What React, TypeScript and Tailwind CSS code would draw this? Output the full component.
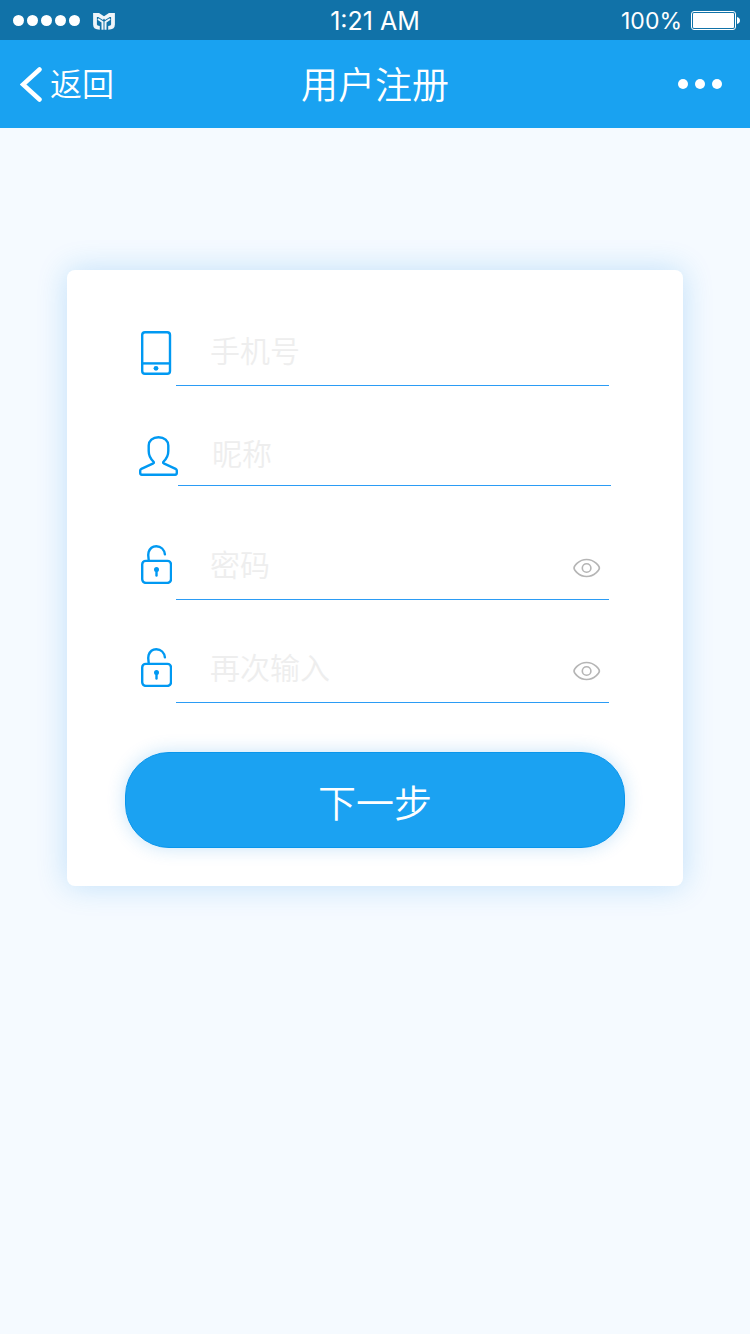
import { useState } from 'react';
import type { ReactNode } from 'react';

type Field = {
  id: string;
  label: string;
  type: 'tel' | 'text' | 'password';
  icon: ReactNode;
  rowClass: string;
  iconClass: string;
};

function PhoneIcon() {
  return (
    <svg width="32" height="46" viewBox="0 0 32 46" fill="none" stroke="#0099f2" strokeWidth="2.4">
      <rect x="2.2" y="2.2" width="27.8" height="41.6" rx="2.8" />
      <path d="M2.2 33.4h27.8" />
      <circle cx="16" cy="38.3" r="2.4" fill="#0099f2" stroke="none" />
    </svg>
  );
}

function UserIcon() {
  return (
    <svg width="39" height="41" viewBox="0 0 39 41" fill="none" stroke="#0099f2" strokeWidth="2.4" strokeLinejoin="round">
      <path d="M19.5 2.2C13.5 2.2 9.7 6 9.7 10.5v5.5c0 5 2 8 4.8 10.6.6.5.5 1.300-.2 1.700L2.400 33.900c-.8.400-1.200.9-1.200 1.700v2.500c0 1 .6 1.600 1.600 1.600h33.400c1 0 1.600-.6 1.600-1.600v-2.500c0-.8-.4-1.300-1.200-1.700l-11.900-5.600c-.7-.4-.8-1.200-.2-1.700 2.800-2.600 4.800-5.600 4.800-10.600v-5.500c0-4.500-3.800-8.300-9.800-8.300z" />
    </svg>
  );
}

function UnlockIcon() {
  return (
    <svg width="32" height="40" viewBox="0 0 32 40" fill="none" stroke="#0099f2" strokeWidth="2.4" strokeLinecap="round">
      <path d="M8.800 16.400C8.400 14 7.700 11 8.600 8.200 9.700 4.600 12.700 2.200 16.300 2.200c4.700 0 8 3.400 8.600 8.200" />
      <rect x="2.2" y="16.9" width="28.8" height="22" rx="3.6" />
      <circle cx="16.5" cy="25.5" r="2.5" fill="#0099f2" stroke="none" />
      <path d="M16.5 26v5.5" />
    </svg>
  );
}

function EyeIcon() {
  return (
    <svg width="28" height="20" viewBox="0 0 28 20" fill="none" stroke="#b5b5b5" strokeWidth="1.6" strokeLinejoin="round">
      <path d="M1 10c0-1.600 4.500-8.500 12.600-8.500S26.400 8.400 26.400 10s-4.700 8.500-12.800 8.500S1 11.600 1 10z" />
      <circle cx="13.6" cy="10" r="4.3" />
    </svg>
  );
}

const fields: Field[] = [
  { id: 'phone', label: '手机号', type: 'tel', icon: <PhoneIcon />, rowClass: 'h-[70px] pr-0.5', iconClass: 'w-[37px] pl-px pb-2.5' },
  { id: 'nickname', label: '昵称', type: 'text', icon: <UserIcon />, rowClass: 'mt-9 h-16', iconClass: 'w-[39px] pb-2.5' },
  { id: 'password', label: '密码', type: 'password', icon: <UnlockIcon />, rowClass: 'mt-11 h-[70px] pr-0.5', iconClass: 'w-[37px] pl-px pb-4' },
  { id: 'confirm', label: '再次输入', type: 'password', icon: <UnlockIcon />, rowClass: 'mt-[33px] h-[70px] pr-0.5', iconClass: 'w-[37px] pl-px pb-4' },
];

function FieldRow({ field }: { field: Field }) {
  const [visible, setVisible] = useState(false);
  const isPassword = field.type === 'password';

  return (
    <div className={`flex ${field.rowClass}`}>
      <label htmlFor={field.id} className={`flex shrink-0 items-end ${field.iconClass}`}>
        {field.icon}
      </label>
      <div className="flex min-w-0 flex-1 items-center border-b border-[#2b9cf5]">
        <input
          id={field.id}
          type={isPassword && visible ? 'text' : field.type}
          aria-label={field.label}
          placeholder={field.label}
          className="h-full min-w-0 flex-1 bg-transparent pb-1 pl-[34px] text-[30px] text-gray-700 outline-none placeholder:text-[#eeeeee]"
        />
        {isPassword && (
          <button
            type="button"
            aria-label="显示密码"
            onClick={() => setVisible(!visible)}
            className="mr-2 shrink-0 cursor-pointer pt-1.5"
          >
            <EyeIcon />
          </button>
        )}
      </div>
    </div>
  );
}

function StatusBar() {
  return (
    <div className="grid h-10 grid-cols-3 items-center bg-[#1172a8] px-2.5 font-['Inter',sans-serif] font-normal text-white">
      <div className="flex items-center pl-[3px]">
        <div className="flex gap-[3px]">
          {[0, 1, 2, 3, 4].map((i) => (
            <span key={i} className="size-[11px] rounded-full bg-white" />
          ))}
        </div>
        <svg className="ml-3" width="24" height="20" viewBox="0 0 24 20" fill="none" stroke="#f0f5f9">
          {/* outer wings */}
          <path d="M12 8.500L6.500 5H3v9.500c0 2.500 1.500 3.300 4.800 3.300M12 8.500L17.500 5H21v9.500c0 2.500-1.500 3.300-4.800 3.300" strokeWidth="3.8" />
          {/* centre stems */}
          <path d="M6 9l4.500 3v7.700M18 9l-4.500 3v7.700" strokeWidth="2" />
        </svg>
      </div>
      <div className="pt-0.5 text-center text-[25px] leading-8">1:21 AM</div>
      <div className="flex items-center justify-end">
        <span className="pt-px text-[23px] leading-8">100%</span>
        <svg className="ml-2" width="50" height="20" viewBox="0 0 50 20">
          <rect x="1.5" y="1.5" width="44" height="18" rx="2.5" fill="none" stroke="#fff" />
          <rect x="3" y="3" width="41" height="15" rx="1" fill="#fff" />
          <path d="M47 7c1.800.6 3 1.800 3 3.500s-1.200 2.900-3 3.500z" fill="#fff" />
        </svg>
      </div>
    </div>
  );
}

function NavBar() {
  return (
    <header className="grid h-22 grid-cols-3 items-center bg-[#19a2f1] px-5 text-white">
      <a href="#back" className="flex items-center text-[32px] leading-none">
        <svg width="22" height="36" viewBox="0 0 22 36" fill="none" stroke="#fff" strokeWidth="4.5" strokeLinecap="round">
          <path d="M19.500 3.500L3 18.500l16.500 15" />
        </svg>
        <span className="ml-2 pb-1">返回</span>
      </a>
      <h1 className="pb-0.5 text-center text-[37px] leading-none">用户注册</h1>
      <button type="button" aria-label="更多" className="mr-2 flex cursor-pointer gap-[7px] justify-self-end">
        {[0, 1, 2].map((i) => (
          <span key={i} className="size-2.5 rounded-full bg-white" />
        ))}
      </button>
    </header>
  );
}

export default function App() {
  return (
    <div className="min-h-screen bg-[#f5faff] font-['Noto_Sans_CJK_SC',sans-serif] font-[350]">
      <StatusBar />
      <NavBar />
      <main className="px-[67px] pt-[142px]">
        <form
          onSubmit={(e) => e.preventDefault()}
          className="rounded-lg bg-white pt-[46px] pb-[38px] shadow-[0_0_30px_rgba(25,142,231,0.24)]"
        >
          <div className="px-18">
            {fields.map((field) => (
              <FieldRow key={field.id} field={field} />
            ))}
          </div>
          <div className="mt-[49px] px-[58px]">
            <button
              type="submit"
              className="h-24 w-full cursor-pointer rounded-[44px] border border-[#0a96ec] bg-[#1ba2f2] text-[38px] text-white shadow-[0_0_18px_rgba(25,142,231,0.24)]"
            >
              下一步
            </button>
          </div>
        </form>
      </main>
    </div>
  );
}
